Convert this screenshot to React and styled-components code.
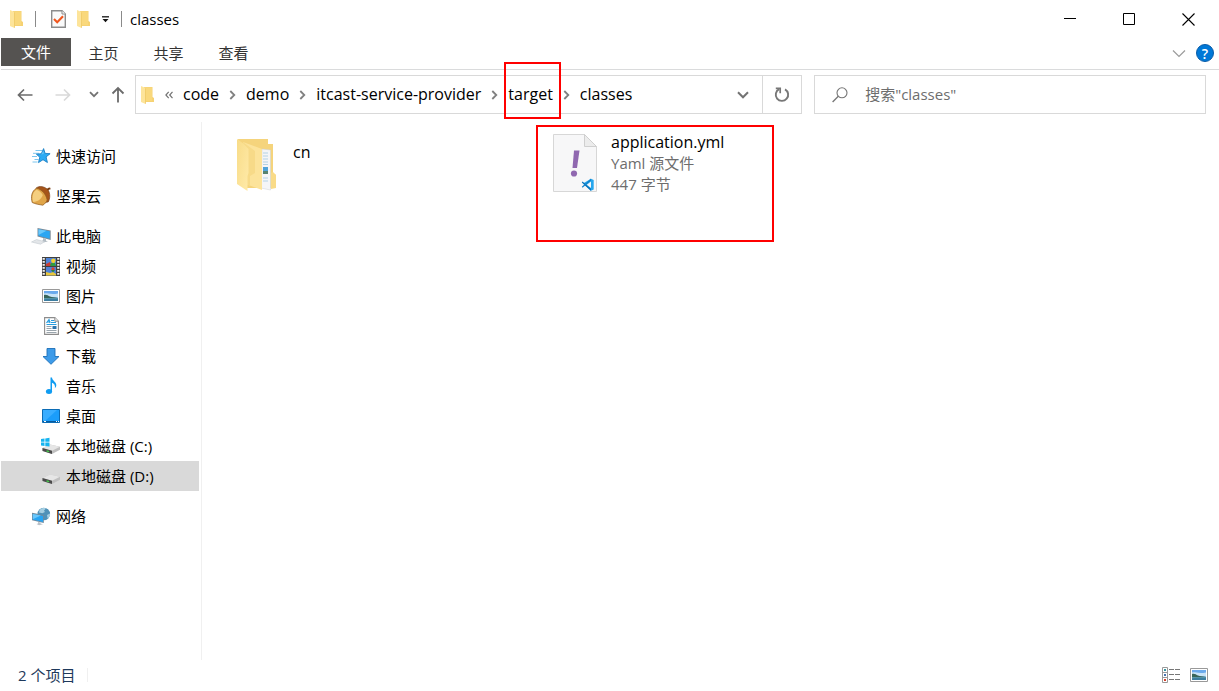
import React, {useState} from 'react';
import styled, {createGlobalStyle} from 'styled-components';

const places = [
    {id: 'quick', label: '快速访问', icon: StarIcon, top: true},
    {id: 'nut', label: '坚果云', icon: NutIcon, top: true},
    {id: 'pc', label: '此电脑', icon: ComputerIcon, top: true},
    {id: 'video', label: '视频', icon: VideoIcon},
    {id: 'pictures', label: '图片', icon: PictureIcon},
    {id: 'docs', label: '文档', icon: DocumentIcon},
    {id: 'downloads', label: '下载', icon: DownloadIcon},
    {id: 'music', label: '音乐', icon: MusicIcon},
    {id: 'desktop', label: '桌面', icon: DesktopIcon},
    {id: 'c', label: '本地磁盘 (C:)', icon: SystemDriveIcon},
    {id: 'd', label: '本地磁盘 (D:)', icon: DriveIcon},
    {id: 'network', label: '网络', icon: NetworkIcon, top: true},
]

const crumbs = ['code', 'demo', 'itcast-service-provider', 'target', 'classes']

function App(){
    const [place, setPlace] = useState('d');
    const [search, setSearch] = useState('');

    return(
    <Explorer>
        <GlobalStyle/>

        <TitleBar>
            <QuickTools>
                <SmallFolderIcon/>
                <Divider/>
                <ToolButton aria-label="属性"><PropertiesIcon/></ToolButton>
                <ToolButton aria-label="新建文件夹"><SmallFolderIcon/></ToolButton>
                <ToolButton aria-label="自定义快速访问工具栏"><CustomizeIcon/></ToolButton>
                <Divider/>
            </QuickTools>
            <Title>classes</Title>
            <WindowButtons>
                <WindowButton aria-label="最小化">
                    <svg width="13" height="13"><path d="M0 5.500H12" stroke="#000"/></svg>
                </WindowButton>
                <WindowButton aria-label="最大化">
                    <svg width="13" height="13"><path d="M.5.500h11v11H.500z" fill="none" stroke="#000"/></svg>
                </WindowButton>
                <WindowButton aria-label="关闭">
                    <svg width="13" height="13"><path d="M.5.500l12 12M12.500.500l-12 12" stroke="#000" strokeWidth="1.100"/></svg>
                </WindowButton>
            </WindowButtons>
        </TitleBar>

        <Ribbon>
            <FileTab>文件</FileTab>
            <Tab>主页</Tab>
            <Tab>共享</Tab>
            <Tab>查看</Tab>
            <RibbonEnd>
                <ToolButton aria-label="展开功能区">
                    <svg width="14" height="9"><path d="M1 1.500l6 6 6-6" fill="none" stroke="#9b9b9b" strokeWidth="1.200"/></svg>
                </ToolButton>
                <HelpButton aria-label="帮助">?</HelpButton>
            </RibbonEnd>
        </Ribbon>

        <AddressRow>
            <NavButtons>
                <NavButton aria-label="后退">
                    <svg width="16" height="14"><path d="M15.500 7H1.500M7 1.500L1.500 7 7 12.500" fill="none" stroke="#6b6b6b" strokeWidth="1.700"/></svg>
                </NavButton>
                <NavButton aria-label="前进" disabled>
                    <svg width="16" height="14"><path d="M.5 7h14M9 1.500L14.500 7 9 12.500" fill="none" stroke="#d9d9d9" strokeWidth="1.700"/></svg>
                </NavButton>
                <NavButton aria-label="最近浏览的位置" $narrow>
                    <svg width="10" height="7"><path d="M1 1.200l4 4 4-4" fill="none" stroke="#737373" strokeWidth="1.800"/></svg>
                </NavButton>
                <NavButton aria-label="上移" $narrow>
                    <svg width="14" height="17"><path d="M7 16.500V2M1.500 7.500L7 2l5.500 5.500" fill="none" stroke="#6b6b6b" strokeWidth="1.800"/></svg>
                </NavButton>
            </NavButtons>

            <AddressBar aria-label="地址">
                <SmallFolderIcon/>
                <MoreButton aria-label="上级位置">
                    <svg width="8" height="8"><path d="M3.700.8L.9 4l2.800 3.200M7.500.8L4.700 4l2.800 3.200" fill="none" stroke="#737373" strokeWidth="1.200"/></svg>
                </MoreButton>
                {crumbs.map((crumb, index) => (
                    <React.Fragment key={crumb}>
                        {index > 0 && <CrumbArrow/>}
                        <Crumb>
                            {crumb}
                            {crumb === 'target' && <Mark $inset="-14px -8px -6px -4px"/>}
                        </Crumb>
                    </React.Fragment>
                ))}
                <BarButton aria-label="以前的位置" $push>
                    <svg width="12" height="8"><path d="M1 1.300l5 5 5-5" fill="none" stroke="#737373" strokeWidth="2"/></svg>
                </BarButton>
                <BarButton aria-label="刷新" $line>
                    <svg width="16" height="16">
                        <path d="M11 2.300a6.200 6.200 0 1 1-5.900-.1" fill="none" stroke="#777" strokeWidth="1.900"/>
                        <path d="M1.800 1.300h4.400v5" fill="none" stroke="#777" strokeWidth="1.700"/>
                    </svg>
                </BarButton>
            </AddressBar>

            <SearchBox>
                <svg width="16" height="16"><circle cx="10" cy="5.800" r="5" fill="none" stroke="#757575" strokeWidth="1.100"/><path d="M6.300 9.300L.6 15" stroke="#757575" strokeWidth="1.300"/></svg>
                <SearchInput
                    aria-label="搜索"
                    placeholder={'搜索"classes"'}
                    value={search}
                    onChange={(e) => setSearch(e.target.value)}
                />
            </SearchBox>
        </AddressRow>

        <Body>
            <Sidebar>
                {places.map(({id, label, icon: Icon, top}) => (
                    <Place
                        key={id}
                        href={'#' + id}
                        $top={top}
                        $active={id === place}
                        onClick={() => setPlace(id)}
                    >
                        <PlaceIcon><Icon/></PlaceIcon>
                        {label}
                    </Place>
                ))}
            </Sidebar>
            <Files>
                <File>
                    <FileIcon><FolderIcon/></FileIcon>
                    <FileText>
                        <FileName>cn</FileName>
                    </FileText>
                </File>
                <File>
                    <FileIcon><YamlIcon/></FileIcon>
                    <FileText>
                        <FileName>application.yml</FileName>
                        <FileInfo>Yaml 源文件</FileInfo>
                        <FileInfo>447 字节</FileInfo>
                    </FileText>
                    <Mark $inset="-6px 87px -47px -7px"/>
                </File>
            </Files>
        </Body>

        <StatusBar>
            <Count>2 个项目</Count>
            <ViewButtons>
                <ToolButton aria-label="详细信息"><DetailsIcon/></ToolButton>
                <ToolButton aria-label="大缩略图"><PictureIcon/></ToolButton>
            </ViewButtons>
        </StatusBar>
    </Explorer>
    )
}

export default App;

function SmallFolderIcon(){
    return(
    <svg width="14" height="18" viewBox="0 0 14 18">
        <path d="M3 1h8.500v10l1.500 1v4H3z" fill="#f6d273"/>
        <path d="M4 1.500h7v13.500H4z" fill="#f9d87c"/>
        <path d="M0 0l4.500 2v16L0 16z" fill="#fde49a"/>
        <path d="M4 2l.8.400V18L4 17.600z" fill="#efc965"/>
    </svg>
    )
}

function PropertiesIcon(){
    return(
    <svg width="15" height="18" viewBox="0 0 15 18">
        <path d="M.7.700h10.300l3.300 3.300v13.300H.700z" fill="#fafafa" stroke="#8c8c8c" strokeWidth="1.400"/>
        <path d="M11 .700V4h3.300" fill="#fff" stroke="#8c8c8c"/>
        <path d="M3 9l3.200 3.300L12 6.200" fill="none" stroke="#f0571f" strokeWidth="2.100"/>
    </svg>
    )
}

function CustomizeIcon(){
    return(
    <svg width="8" height="7"><path d="M0 .800h7" stroke="#222" strokeWidth="1.400"/><path d="M.5 3h6L3.500 6.300z" fill="#111"/></svg>
    )
}

function CrumbArrow(){
    return(
    <ArrowButton aria-label="展开">
        <svg width="7" height="10"><path d="M1.300 1l4 4-4 4" fill="none" stroke="#808080" strokeWidth="1.800"/></svg>
    </ArrowButton>
    )
}

function StarIcon(){
    return(
    <svg width="20" height="18" viewBox="0 0 20 18">
        <path d="M4.500 3.500H11M2 6.300h6M1 9.500h5M3.500 12.500h4M1.500 15h5" stroke="#7cc6ee" strokeWidth="1"/>
        <path d="M12.600 1.600l1.500 4.800 5 .300-4 3.200 1.300 5.600-4.400-2.800-4.500 2.900 1.300-5.400-3.400-3 4.900-.5z" fill="#2caaf3" stroke="#1b7fc4" strokeWidth=".9"/>
        <path d="M12.300 3.800l.6 2.800-2.600 1.200z" fill="#63c4f8"/>
    </svg>
    )
}

function NutIcon(){
    return(
    <svg width="20" height="20" viewBox="0 0 20 20">
        <path d="M14.500 4.500c1-1.500 2.300-2.600 4.600-2.900l.6 1.700c-1.700.2-2.500 1-3.100 2.600z" fill="#7a3d12"/>
        <path d="M5 2.200C8-.6 14 .300 17 4c2.600 3.600 2 9.200.2 12L13 16.500z" fill="#a65519" stroke="#6f3710" strokeWidth=".6"/>
        <path d="M5.700 2.200c5 1.200 9.300 5.800 10.500 11.800-.8 2.200-2.400 4-4.400 5.200-3.300-.6-7.800-1.200-10.600-2.700C-.3 11.300.300 5 5.700 2.200z" fill="#e0a548" stroke="#8f5a20" strokeWidth=".7"/>
        <path d="M5.500 3.800c2.600.8 4.800 2.900 6.300 5.200-1.500 4.300-5 6.500-9.800 7C.9 11 1.500 6 5.500 3.800z" fill="#f5cf80"/>
    </svg>
    )
}

function ComputerIcon(){
    return(
    <svg width="20" height="18" viewBox="0 0 20 18">
        <path d="M6.500 1l13.200 2.500v9.500L6.500 9.500z" fill="#7b8a96"/>
        <path d="M7.500 2.200l11.300 2.100v7.500L7.500 8.800z" fill="#2ba6f2"/>
        <path d="M7.500 2.200l8 1.500-8 4.300z" fill="#6ac8fb"/>
        <path d="M12 11l3 .700v2l2 .800-4 .8-2-1.500 1-.5z" fill="#b4bdc4"/>
        <path d="M5.500 12.500l8.300 2.200-4.300 2.500L.5 15z" fill="#e3e6e9" stroke="#bcc4ca" strokeWidth=".5"/>
    </svg>
    )
}

function VideoIcon(){
    return(
    <svg width="18" height="19" viewBox="0 0 18 19">
        <path d="M0 0h18v19H0z" fill="#404040"/>
        <path d="M1.700 1v18M16.300 1v18" stroke="#f0f0f0" strokeWidth="2.200" strokeDasharray="1.800 1.200"/>
        <path d="M4 1h10v8H4zM4 10h10v8.500H4z" fill="#4f83d8"/>
        <circle cx="11.300" cy="3.800" r="2.200" fill="#f0cf2e"/>
        <path d="M4 7l4-2 1.500 4H4z" fill="#cc3d32"/>
        <path d="M9 6h4l1 3H8z" fill="#2f9b42"/>
        <circle cx="11" cy="12" r="1.700" fill="#d5422e"/>
        <path d="M4 15l4 1 3-1 3 2v1.500H4z" fill="#e8c63b"/>
        <path d="M9 13h4l-2 2.500z" fill="#2d8140"/>
    </svg>
    )
}

function PictureIcon(){
    return(
    <svg width="18" height="14" viewBox="0 0 18 14">
        <path d="M.5.500h17v13H.500z" fill="#fff" stroke="#999"/>
        <path d="M2 2h14v10H2z" fill="#6aa9ec"/>
        <path d="M2 4.500c3-1 6 1.500 14 0v4H2z" fill="#c8e3f7"/>
        <path d="M2 6c2.500-.7 4 .700 6 1.500 2 .800 5 .800 8 1.500H2z" fill="#38655a"/>
        <path d="M2 9h14v3H2z" fill="#5b9aa8"/>
        <path d="M2 10.500c5-1.500 9 0 14-1V12H2z" fill="#3c7da0"/>
    </svg>
    )
}

function DocumentIcon(){
    return(
    <svg width="15" height="18" viewBox="0 0 15 18">
        <path d="M.6.600h10.200l3.600 3.600v13.200H.600z" fill="#fff" stroke="#8c8c8c" strokeWidth="1.100"/>
        <path d="M10.800.600v3.600h3.600" fill="#eee" stroke="#8c8c8c"/>
        <path d="M2.500 6L5 2.500 6 6M3.500 5h3M7 3.500h3M7 5.500h5M2.500 7.500h10" fill="none" stroke="#289de0" strokeWidth="1.200"/>
        <path d="M2.500 9.500h5M2.500 11.500h5M2.500 13.500h10M2.500 15.500h10" stroke="#8f9ba4" strokeWidth=".9"/>
        <path d="M8.500 9h4v3h-4z" fill="#2c75ae"/>
    </svg>
    )
}

function DownloadIcon(){
    return(
    <svg width="18" height="17" viewBox="0 0 18 17"><path d="M5 .500h8v8h4L9 16.300 1 8.500h4z" fill="#3d9be9" stroke="#1d6fb8" strokeWidth=".9"/></svg>
    )
}

function MusicIcon(){
    return(
    <svg width="18" height="18" viewBox="0 0 18 18">
        <path d="M8.500.500h1.500c.3 3.600 4.600 4.200 4.300 8-.1 1-.7 2-1.400 2.700.6-3-.9-4.700-2.900-5.400V14H8.500z" fill="#109cf1"/>
        <ellipse cx="7" cy="14.500" rx="3.100" ry="2.500" fill="#109cf1"/>
    </svg>
    )
}

function DesktopIcon(){
    return(
    <svg width="18" height="14" viewBox="0 0 18 14">
        <path d="M.5.500h17v13H.500z" fill="#1b9dfa" stroke="#0c6cb5"/>
        <path d="M1 1h14L3 12H1z" fill="#39adff"/>
        <path d="M1 12.500h16" stroke="#075a9d"/>
        <path d="M2 12.500h2M14 12.500h1M16 12.500h1" stroke="#fff"/>
    </svg>
    )
}

function DriveShape(){
    return(
    <g>
        <path d="M1.500 11L9 7.500l10 2.200v3L11 17 1.500 13.800z" fill="#bfbfbf"/>
        <path d="M1.500 11L9 7.500l10 2.200-8 4z" fill="#e6e6e6"/>
        <path d="M1.500 11l9.500 2.700V17l-9.500-3z" fill="#4b4b4b"/>
        <path d="M5.500 13.800l2.500.8" stroke="#44d04a" strokeWidth="1.400"/>
    </g>
    )
}

function DriveIcon(){
    return(
    <svg width="20" height="18" viewBox="0 0 20 18"><DriveShape/></svg>
    )
}

function SystemDriveIcon(){
    return(
    <svg width="20" height="18" viewBox="0 0 20 18">
        <DriveShape/>
        <path d="M0 2l3.500-.5v3.300H0zM4.300 1.400L8.500.800v4H4.300zM0 5.600h3.500v3.300L0 8.400zM4.300 5.600h4.200v4l-4.200-.6z" fill="#16b4f0"/>
    </svg>
    )
}

function NetworkIcon(){
    return(
    <svg width="20" height="19" viewBox="0 0 20 19">
        <circle cx="12.800" cy="7" r="6.300" fill="#4f91b8"/>
        <path d="M8.500 3c1.800-1.700 4.600-2.300 6.300-1.600L13 3.800l1 1.200-2.700 1.200L8 5.500zM16 8l3-1.500c.2 2.400-.8 4.200-2.300 5.300z" fill="#a6cfe2"/>
        <path d="M1 5.800l11.800 2.300v8L1 13.300z" fill="#6f8a9e"/>
        <path d="M1.800 6.900l10.200 2v6l-10.200-2.300z" fill="#27a4f3"/>
        <path d="M1.800 6.900l8 1.600-8 3.700z" fill="#69c7fb"/>
        <path d="M7 15l2.500.5v1l2.500.800-4 1-2.500-1.300 1.500-.5z" fill="#b9c1c8"/>
    </svg>
    )
}

function FolderIcon(){
    return(
    <svg width="40" height="55" viewBox="0 -3 40 55">
        <defs>
            <linearGradient id="folderFront" x1="0" y1="0" x2="1" y2="1">
                <stop offset="0" stopColor="#f8dc88"/>
                <stop offset="1" stopColor="#ffeaa9"/>
            </linearGradient>
        </defs>
        <path d="M1 0h30v5h5v29l3 2v13H8z" fill="#f5d47c"/>
        <path d="M25 10l8.500 1v40L24 49z" fill="#f4f5f7" stroke="#ccd1d5" strokeWidth=".5"/>
        <path d="M26 14h5M26 17h5M26 20h5M26 23h5M26 25.500h5M26 39h5M26 42h5" stroke="#b3d2e5"/>
        <path d="M26 28h5v4h-5z" fill="#4fa3d9"/>
        <path d="M26 32h5v3h-5z" fill="#58836f"/>
        <path d="M36 33l3 3v13l-5 1V34z" fill="#f9db88"/>
        <path d="M6 3l19 7v41L6 44z" fill="#fce39a"/>
        <path d="M6 3l12 9v22l-5 3v10L6 44z" fill="#f7da88"/>
        <path d="M0 0l5.500 4 6 6v24l-1 3v15L0 45z" fill="url(#folderFront)"/>
    </svg>
    )
}

function YamlIcon(){
    return(
    <svg width="44" height="58" viewBox="0 0 44 58">
        <path d="M.5.500h31l12 12v45H.500z" fill="#f7f7f8" stroke="#d7d7d7"/>
        <path d="M31.500.500v12h12z" fill="#ececec" stroke="#cfcfcf"/>
        <path d="M21 16.500h5.500L24 34h-4.500z" fill="#9068b0"/>
        <circle cx="21" cy="39.500" r="3.100" fill="#9068b0"/>
        <path d="M38 44.700l2.700 1.200v9.700L38 56.700l-8-7.300z" fill="#27a7ee"/>
        <path d="M29.500 47.500l8.500 7.200V57L28.800 48.400z" fill="#0a73bb"/>
        <path d="M29.500 53.700l8.500-7v-2.200L28.800 52.800z" fill="#1484cc"/>
        <path d="M38 47.500v6.500l-4.200-3.300z" fill="#f7f7f8"/>
    </svg>
    )
}

function DetailsIcon(){
    return(
    <svg width="18" height="16" viewBox="0 0 18 16">
        <path d="M.5.500h5v15h-5zM.500 5.500h5M.500 10.500h5" fill="#fff" stroke="#9a9a9a"/>
        <path d="M2 2h2v2H2z" fill="#3694a0"/>
        <path d="M2 7h2v2H2z" fill="#4774b0"/>
        <path d="M2 12h2v2H2z" fill="#d3412c"/>
        <path d="M7 2.500h5M13 2.500h5M7 7.500h5M13 7.500h5M7 12.500h5M13 12.500h5" stroke="#777"/>
    </svg>
    )
}

const GlobalStyle = createGlobalStyle`
    * {
        box-sizing: border-box;
    }

    body {
        margin: 0;
        background: #fff;
        color: #000;
    }

    body, button, input {
        font-family: "Open Sans", "Noto Sans CJK SC", sans-serif;
        font-size: 15px;
        line-height: 21px;
    }

    button {
        display: flex;
        align-items: center;
        justify-content: center;
        padding: 0;
        border: none;
        background: none;
        color: inherit;
    }

    svg {
        display: block;
        flex: none;
    }
`

const Explorer = styled.div`
    display: flex;
    flex-direction: column;
    min-height: 100vh;
    padding-left: 1px;
`

const TitleBar = styled.header`
    display: flex;
    align-items: center;
    height: 38px;
`

const QuickTools = styled.div`
    display: flex;
    align-items: center;
    gap: 11px;
    padding-left: 9px;
`

const ToolButton = styled.button`
    flex: none;
`

const Divider = styled.span`
    width: 1px;
    height: 16px;
    margin-right: 4px;
    background: #8a8a8a;
`

const Title = styled.h1`
    flex: 1;
    margin: 0 0 0 4px;
    font-size: 15px;
    font-weight: 400;
`

const WindowButtons = styled.div`
    display: flex;
    margin-right: 1px;
`

const WindowButton = styled.button`
    width: 59px;
    height: 38px;
`

const Ribbon = styled.div`
    display: flex;
    padding-bottom: 3px;
    border-bottom: 1px solid #dadbdc;
`

const Tab = styled.button`
    width: 65px;
    height: 28px;
    padding-top: 2px;
    color: #333;
`

const FileTab = styled(Tab)`
    width: 70px;
    padding-top: 0;
    background: #555351;
    color: #fff;
`

const RibbonEnd = styled.div`
    display: flex;
    align-items: center;
    gap: 10px;
    margin: 0 5px 0 auto;
    padding-top: 2px;
`

const HelpButton = styled.button`
    width: 18px;
    height: 18px;
    border: 1px solid #0a5ca8;
    border-radius: 50%;
    background: #0078d7;
    color: #fff;
    font-size: 14px;
    font-weight: 600;
`

const AddressRow = styled.div`
    display: grid;
    grid-template-columns: auto 26fr 15fr;
    padding: 5px 13px 8px 5px;
`

const NavButtons = styled.div`
    display: flex;
    margin-right: 5px;
`

const NavButton = styled.button`
    width: ${props => props.$narrow ? '24px' : '38px'};
`

const AddressBar = styled.nav`
    display: flex;
    align-items: center;
    height: 39px;
    margin-right: 12px;
    padding-left: 5px;
    border: 1px solid #d9d9d9;
`

const MoreButton = styled.button`
    margin: 0 10px;
`

const Crumb = styled.button`
    position: relative;
    height: 37px;
    font-size: 16px;
`

const ArrowButton = styled.button`
    width: 27px;
    height: 37px;
`

const BarButton = styled.button`
    width: ${props => props.$line ? '39px' : '38px'};
    height: 37px;
    margin-left: ${props => props.$push ? 'auto' : '0'};
    border-left: ${props => props.$line ? '1px solid #d9d9d9' : 'none'};
`

const Mark = styled.span`
    position: absolute;
    inset: ${props => props.$inset};
    border: 2px solid #f00;
    pointer-events: none;
`

const SearchBox = styled.label`
    display: flex;
    align-items: center;
    gap: 17px;
    padding: 0 17px;
    border: 1px solid #d9d9d9;
`

const SearchInput = styled.input`
    flex: 1;
    min-width: 0;
    padding: 0;
    border: none;
    outline: none;

    &::placeholder {
        color: #6d6d6d;
        opacity: 1;
    }
`

const Body = styled.div`
    display: flex;
    flex: 1;
`

const Sidebar = styled.nav`
    flex: none;
    width: 201px;
    padding: 9px 2px 0 0;
    border-right: 1px solid #f0f0f0;
`

const Place = styled.a`
    display: flex;
    align-items: center;
    gap: 5px;
    height: 30px;
    margin-top: ${props => props.$top ? '10px' : '0'};
    padding-left: ${props => props.$top ? '30px' : '40px'};
    background: ${props => props.$active ? '#d9d9d9' : 'transparent'};
    color: #000;
    text-decoration: none;
`

const PlaceIcon = styled.span`
    display: flex;
    justify-content: center;
    width: 20px;
`

const Files = styled.main`
    display: grid;
    grid-template-columns: repeat(auto-fill, 318px);
    align-content: start;
    flex: 1;
    padding: 9px 23px;
`

const File = styled.div`
    position: relative;
    display: flex;
    align-items: center;
    gap: 4px;
`

const FileIcon = styled.div`
    display: flex;
    align-items: center;
    justify-content: center;
    width: 64px;
    height: 64px;
`

const FileText = styled.div`
    min-height: 42px;
`

const FileName = styled.div`
    font-size: 16px;
`

const FileInfo = styled.div`
    color: #6d6d6d;
`

const StatusBar = styled.footer`
    display: flex;
    align-items: center;
    justify-content: space-between;
    height: 31px;
    padding: 0 11px 2px 17px;
    color: #1e395b;
`

const Count = styled.span`
    padding-right: 12px;
    border-right: 1px solid #f0f0f0;
    line-height: 14px;
`

const ViewButtons = styled.div`
    display: flex;
    align-items: center;
    gap: 10px;
`
